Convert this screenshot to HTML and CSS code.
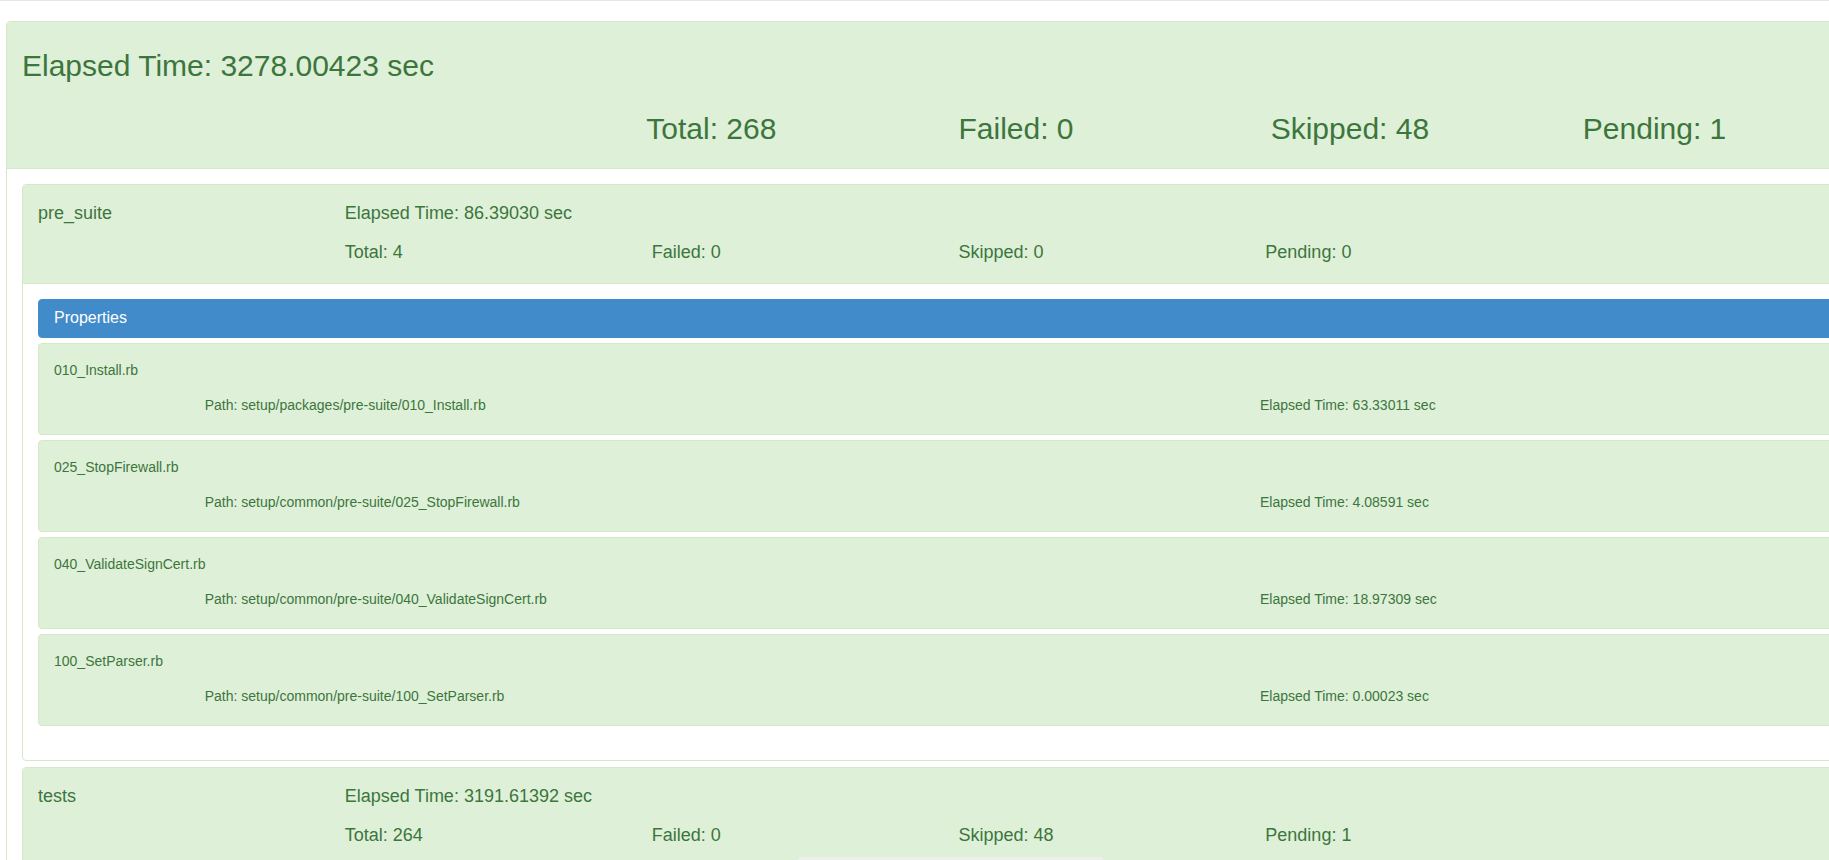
FILE: index.html
```html
<!DOCTYPE html>
<html lang="en">
<head>
<meta charset="utf-8">
<title>Test Report</title>
<link rel="stylesheet" href="styles.css">
</head>
<body>
<div class="topline"></div>
<div class="page">
  <div class="panel panel-outer">
    <div class="heading heading-main">
      <div class="main-title">Elapsed Time: 3278.00423 sec</div>
      <div class="grid6 main-stats">
        <div class="cell start3">Total: 268</div>
        <div class="cell">Failed: 0</div>
        <div class="cell">Skipped: 48</div>
        <div class="cell">Pending: 1</div>
      </div>
    </div>
    <div class="outer-body">
      <div class="panel suite">
        <div class="heading heading-suite">
          <div class="grid6 suite-row">
            <div class="cell">pre_suite</div>
            <div class="cell span4">Elapsed Time: 86.39030 sec</div>
          </div>
          <div class="grid6 suite-row suite-row2">
            <div class="cell start2">Total: 4</div>
            <div class="cell">Failed: 0</div>
            <div class="cell">Skipped: 0</div>
            <div class="cell">Pending: 0</div>
          </div>
        </div>
        <div class="suite-body">
          <div class="props">Properties</div>
          <div class="file">
            <div class="file-name">010_Install.rb</div>
            <div class="grid12 file-row">
              <div class="cell path">Path: setup/packages/pre-suite/010_Install.rb</div>
              <div class="cell elapsed">Elapsed Time: 63.33011 sec</div>
            </div>
          </div>
          <div class="file">
            <div class="file-name">025_StopFirewall.rb</div>
            <div class="grid12 file-row">
              <div class="cell path">Path: setup/common/pre-suite/025_StopFirewall.rb</div>
              <div class="cell elapsed">Elapsed Time: 4.08591 sec</div>
            </div>
          </div>
          <div class="file">
            <div class="file-name">040_ValidateSignCert.rb</div>
            <div class="grid12 file-row">
              <div class="cell path">Path: setup/common/pre-suite/040_ValidateSignCert.rb</div>
              <div class="cell elapsed">Elapsed Time: 18.97309 sec</div>
            </div>
          </div>
          <div class="file">
            <div class="file-name">100_SetParser.rb</div>
            <div class="grid12 file-row">
              <div class="cell path">Path: setup/common/pre-suite/100_SetParser.rb</div>
              <div class="cell elapsed">Elapsed Time: 0.00023 sec</div>
            </div>
          </div>
        </div>
      </div>
      <div class="panel suite">
        <div class="heading heading-suite">
          <div class="grid6 suite-row">
            <div class="cell">tests</div>
            <div class="cell span4">Elapsed Time: 3191.61392 sec</div>
          </div>
          <div class="grid6 suite-row suite-row2">
            <div class="cell start2">Total: 264</div>
            <div class="cell">Failed: 0</div>
            <div class="cell">Skipped: 48</div>
            <div class="cell">Pending: 1</div>
          </div>
        </div>
      </div>
    </div>
  </div>
</div>
<div class="toast"></div>
</body>
</html>
```

FILE: styles.css
```css
html, body {
  margin: 0;
  padding: 0;
  overflow: hidden;
  background: #ffffff;
}

body {
  font-family: "Liberation Sans", Arial, Helvetica, sans-serif;
  font-size: 14px;
  line-height: 20px;
  color: #333333;
}

.topline {
  height: 0;
  border-bottom: 1px solid #e7e7e7;
}

.page {
  padding: 20px 6px 0 6px;
  width: 1875px;
}

.panel {
  background: #ffffff;
  border: 1px solid #d6e9c6;
  border-radius: 4px;
}

.panel-outer {
  width: 1875px;
  box-sizing: border-box;
}

.heading {
  background: #dff0d8;
  color: #3c763d;
  border-bottom: 1px solid #d6e9c6;
  border-radius: 3px 3px 0 0;
}

.grid6 {
  display: grid;
  grid-template-columns: repeat(6, 1fr);
}

.grid12 {
  display: grid;
  grid-template-columns: repeat(12, 1fr);
}

.cell {
  padding: 0 15px;
  white-space: nowrap;
}

.start2 { grid-column-start: 2; }
.start3 { grid-column-start: 3; }
.span4 { grid-column: span 4; }

/* main heading */
.heading-main {
  padding: 27px 0 18px 0;
}

.main-title {
  padding: 0 15px;
  font-size: 30px;
  line-height: 33px;
}

.main-stats {
  margin-top: 25px;
  font-size: 30px;
  line-height: 43px;
}

.outer-body {
  padding: 15px;
}

/* suite panels */
.suite {
  margin-bottom: 6px;
}

.heading-suite {
  padding: 18px 0 21px 0;
}

.suite-row {
  font-size: 18px;
  line-height: 20px;
}

.suite-row2 {
  margin-top: 19px;
}

.suite-body {
  padding: 15px 15px 34px 15px;
}

.props {
  background: #428bca;
  border: 1px solid #428bca;
  border-radius: 4px;
  color: #ffffff;
  font-size: 16px;
  line-height: 18px;
  padding: 9px 15px 10px 15px;
  margin-bottom: 5px;
}

.file {
  background: #dff0d8;
  border: 1px solid #d6e9c6;
  border-radius: 4px;
  color: #3c763d;
  padding: 16px 0 19px 0;
  margin-top: 5px;
}

.props + .file {
  margin-top: 0;
}

.file-name {
  padding: 0 15px;
}

.file-row {
  margin-top: 15px;
}

.path {
  grid-column: 2 / span 7;
}

.elapsed {
  grid-column: 9 / span 4;
}

.toast {
  position: fixed;
  left: 798px;
  top: 857px;
  width: 305px;
  height: 30px;
  background: #eeeeee;
  border-radius: 3px 3px 0 0;
}
```
